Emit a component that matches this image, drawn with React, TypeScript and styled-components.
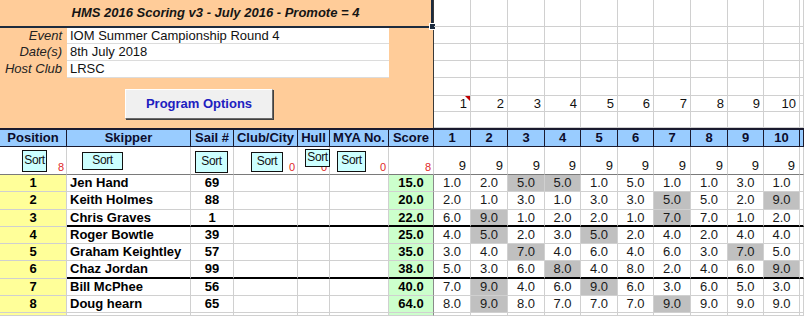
import React from "react";
import styled, { createGlobalStyle, css } from "styled-components";

const GlobalStyle = createGlobalStyle`
  body {
    margin: 0;
    background: #ffffff;
    font-family: "Liberation Sans", Arial, sans-serif;
    font-size: 13px;
    color: #111;
    overflow: hidden;
  }
`;

const RACE_WIDTHS = [37, 37, 37, 36, 37, 36, 37, 37, 36, 36];
const RACE_COLS = RACE_WIDTHS.map((w) => `${w}px`).join(" ");
const COLS = `67px 124px 43px 64px 32px 59px 45px ${RACE_COLS} 1fr`;

const GRID = "#d0d0d0";
const DARK = "#1c2b3e";

const Sheet = styled.div`
  width: 804px;
  height: 316px;
  overflow: hidden;
`;

const Top = styled.div`
  display: flex;
  height: 128px;
`;

const Panel = styled.div`
  position: relative;
  width: 434px;
  box-sizing: border-box;
  background: #ffcc99;
  border-right: 1px solid #3a3a3a;
  display: flex;
  flex-direction: column;
`;

const Title = styled.div`
  height: 28px;
  box-sizing: border-box;
  border-bottom: 2px solid ${DARK};
  border-right: 2px solid ${DARK};
  text-align: center;
  line-height: 25px;
  font-weight: bold;
  font-style: italic;
  color: #151515;
`;

const Handle = styled.div`
  position: absolute;
  left: 430px;
  top: 24px;
  width: 5px;
  height: 5px;
  background: ${DARK};
  outline: 1px solid #ffffff;
`;

const Fields = styled.div`
  display: grid;
  grid-template-columns: 67px 322px;
  grid-template-rows: 16px 17px 17px;
`;

const Label = styled.div`
  text-align: right;
  padding-right: 5px;
  font-style: italic;
  line-height: 16px;
  color: #222;
`;

const Field = styled.div`
  background: #ffffff;
  box-sizing: border-box;
  border-bottom: 1px solid #dcdcdc;
  padding-left: 3px;
  line-height: 16px;
  color: #111;
`;

const ButtonRow = styled.div`
  flex: 1;
  display: flex;
  align-items: center;
  padding-left: 125px;
  padding-top: 1px;
`;

const ProgramButton = styled.button`
  width: 148px;
  height: 30px;
  background: #f0f0f0;
  border: 1px solid;
  border-color: #ffffff #6a6a6a #6a6a6a #ffffff;
  box-shadow: 1px 1px 0 #404040;
  font-family: "Liberation Sans", Arial, sans-serif;
  font-size: 13px;
  font-weight: bold;
  color: #2020c0;
  padding: 0;
`;

const RightGrid = styled.div`
  flex: 1;
  display: grid;
  grid-template-columns: ${RACE_COLS} 1fr;
  grid-template-rows: 27px 17px 17px 17px 18px 16px 16px;
`;

const GridCell = styled.div`
  position: relative;
  box-sizing: border-box;
  border-right: 1px solid ${GRID};
  border-bottom: 1px solid ${GRID};
  text-align: right;
  padding-right: 3px;
  line-height: 16px;
  color: #111;
`;

const Mark = styled.span`
  position: absolute;
  top: 0;
  right: 0;
  width: 0;
  height: 0;
  border-top: 5px solid #c00000;
  border-left: 5px solid transparent;
`;

const Table = styled.div`
  display: grid;
  grid-template-columns: ${COLS};
  grid-template-rows: 19px 28px repeat(8, 17.25px) 1fr;
  height: 188px;
`;

const HeadCell = styled.div`
  box-sizing: border-box;
  background: #99ccff;
  border-top: 2px solid #1a1a2e;
  border-bottom: 1px solid #1a1a2e;
  border-right: 1px solid #1a1a2e;
  text-align: center;
  font-weight: bold;
  line-height: 16px;
  color: #0c0c2c;
  white-space: nowrap;
  overflow: hidden;
`;

const SortCell = styled.div<{ $race?: boolean }>`
  position: relative;
  box-sizing: border-box;
  border-right: 1px solid ${GRID};
  border-bottom: 1px solid #7a7a7a;
  display: flex;
  justify-content: flex-end;
  align-items: flex-end;
  padding-right: ${(p) => (p.$race ? "4px" : "2px")};
  padding-bottom: ${(p) => (p.$race ? "1px" : "0")};
`;

const Count = styled.span`
  font-size: 11px;
  line-height: 13px;
  color: #e02828;
`;

const SortButton = styled.div<{ $l: number; $t: number; $w: number; $h: number }>`
  position: absolute;
  left: ${(p) => p.$l}px;
  top: ${(p) => p.$t}px;
  width: ${(p) => p.$w}px;
  height: ${(p) => p.$h}px;
  box-sizing: border-box;
  background: #ccffff;
  border: 1px solid #111;
  overflow: hidden;
  font-size: 12px;
  letter-spacing: -0.4px;
  line-height: ${(p) => p.$h - 4}px;
  text-align: center;
  white-space: nowrap;
  color: #111;
`;

const baseCell = css<{ $thick?: boolean }>`
  box-sizing: border-box;
  border-right: 1px solid ${GRID};
  border-bottom: ${(p) => (p.$thick ? "2px solid #000" : `1px solid ${GRID}`)};
  line-height: 16px;
  white-space: nowrap;
  overflow: hidden;
`;

const PosCell = styled.div`
  box-sizing: border-box;
  background: #ffff99;
  border-right: 1px solid ${GRID};
  border-bottom: 1px solid ${GRID};
  text-align: center;
  font-weight: bold;
  line-height: 16px;
  color: #000;
`;

const TextCell = styled.div<{ $thick?: boolean; $align?: string; $bold?: boolean }>`
  ${baseCell};
  text-align: ${(p) => p.$align || "left"};
  font-weight: ${(p) => (p.$bold ? "bold" : "normal")};
  padding-left: ${(p) => (p.$align === "left" ? "3px" : "0")};
  color: #000;
`;

const ScoreCell = styled.div<{ $thick?: boolean }>`
  ${baseCell};
  background: #ccffcc;
  border-right-color: #8a8a8a;
  text-align: center;
  font-weight: bold;
  color: #000;
`;

const RaceCell = styled.div<{ $thick?: boolean; $discard?: boolean }>`
  ${baseCell};
  background: ${(p) => (p.$discard ? "#c0c0c0" : "#ffffff")};
  text-align: center;
  color: #1a1a1a;
`;

type Row = { pos: number; name: string; sail: string; score: string; races: number[]; discards: number[] };

const rows: Row[] = [
  { pos: 1, name: "Jen Hand", sail: "69", score: "15.0", races: [1, 2, 5, 5, 1, 5, 1, 1, 3, 1], discards: [2, 3] },
  { pos: 2, name: "Keith Holmes", sail: "88", score: "20.0", races: [2, 1, 3, 1, 3, 3, 5, 5, 2, 9], discards: [6, 9] },
  { pos: 3, name: "Chris Graves", sail: "1", score: "22.0", races: [6, 9, 1, 2, 2, 1, 7, 7, 1, 2], discards: [1, 6] },
  { pos: 4, name: "Roger Bowtle", sail: "39", score: "25.0", races: [4, 5, 2, 3, 5, 2, 4, 2, 4, 4], discards: [1, 4] },
  { pos: 5, name: "Graham Keightley", sail: "57", score: "35.0", races: [3, 4, 7, 4, 6, 4, 6, 3, 7, 5], discards: [2, 8] },
  { pos: 6, name: "Chaz Jordan", sail: "99", score: "38.0", races: [5, 3, 6, 8, 4, 8, 2, 4, 6, 9], discards: [3, 9] },
  { pos: 7, name: "Bill McPhee", sail: "56", score: "40.0", races: [7, 9, 4, 6, 9, 6, 3, 6, 5, 3], discards: [1, 4] },
  { pos: 8, name: "Doug hearn", sail: "65", score: "64.0", races: [8, 9, 8, 7, 7, 7, 9, 9, 9, 9], discards: [1, 6] },
];

const headers = ["Position", "Skipper", "Sail #", "Club/City", "Hull", "MYA No.", "Score"];
const raceNums = Array.from({ length: 10 }, (_, i) => i + 1);

const sorts = [
  { btn: { l: 22, t: 3, w: 25, h: 22 }, count: "8" },
  { btn: { l: 15, t: 5, w: 41, h: 18 }, count: "" },
  { btn: { l: 4, t: 4, w: 33, h: 22 }, count: "" },
  { btn: { l: 17, t: 5, w: 32, h: 20 }, count: "0" },
  { btn: { l: 7, t: 2, w: 25, h: 18 }, count: "0" },
  { btn: { l: 7, t: 4, w: 29, h: 21 }, count: "0" },
  { btn: null, count: "8" },
];

const App = () => {
  return (
    <Sheet>
      <GlobalStyle />
      <Top>
        <Panel>
          <Title>HMS 2016 Scoring v3 - July 2016 - Promote = 4</Title>
          <Handle />
          <Fields>
            <Label>Event</Label>
            <Field>IOM Summer Campionship Round 4</Field>
            <Label>Date(s)</Label>
            <Field>8th July 2018</Field>
            <Label>Host Club</Label>
            <Field>LRSC</Field>
          </Fields>
          <ButtonRow>
            <ProgramButton>Program Options</ProgramButton>
          </ButtonRow>
        </Panel>
        <RightGrid>
          {Array.from({ length: 7 }).map((_, r) =>
            Array.from({ length: 11 }).map((_, c) => (
              <GridCell key={`${r}-${c}`}>
                {r === 5 && c < 10 ? c + 1 : ""}
                {r === 5 && c === 0 && <Mark />}
              </GridCell>
            ))
          )}
        </RightGrid>
      </Top>

      <Table>
        {headers.map((h) => (
          <HeadCell key={h}>{h}</HeadCell>
        ))}
        {raceNums.map((n) => (
          <HeadCell key={`h${n}`}>{n}</HeadCell>
        ))}
        <HeadCell />

        {sorts.map((s, i) => (
          <SortCell key={`s${i}`}>
            <Count>{s.count}</Count>
            {s.btn && (
              <SortButton $l={s.btn.l} $t={s.btn.t} $w={s.btn.w} $h={s.btn.h}>
                Sort
              </SortButton>
            )}
          </SortCell>
        ))}
        {raceNums.map((n) => (
          <SortCell key={`s9-${n}`} $race>
            9
          </SortCell>
        ))}
        <SortCell />

        {rows.map((row) => {
          const thick = row.pos === 3 || row.pos === 6;
          return (
            <React.Fragment key={row.pos}>
              <PosCell>{row.pos}</PosCell>
              <TextCell $thick={thick} $align="left" $bold>
                {row.name}
              </TextCell>
              <TextCell $thick={thick} $align="center" $bold>
                {row.sail}
              </TextCell>
              <TextCell $thick={thick} />
              <TextCell $thick={thick} />
              <TextCell $thick={thick} />
              <ScoreCell $thick={thick}>{row.score}</ScoreCell>
              {row.races.map((v, i) => (
                <RaceCell key={i} $thick={thick} $discard={row.discards.includes(i)}>
                  {v.toFixed(1)}
                </RaceCell>
              ))}
              <RaceCell $thick={thick} />
            </React.Fragment>
          );
        })}

        <PosCell />
        <TextCell />
        <TextCell />
        <TextCell />
        <TextCell />
        <TextCell />
        <ScoreCell />
        {raceNums.map((n) => (
          <RaceCell key={`e${n}`} />
        ))}
        <RaceCell />
      </Table>
    </Sheet>
  );
};

export default App;
